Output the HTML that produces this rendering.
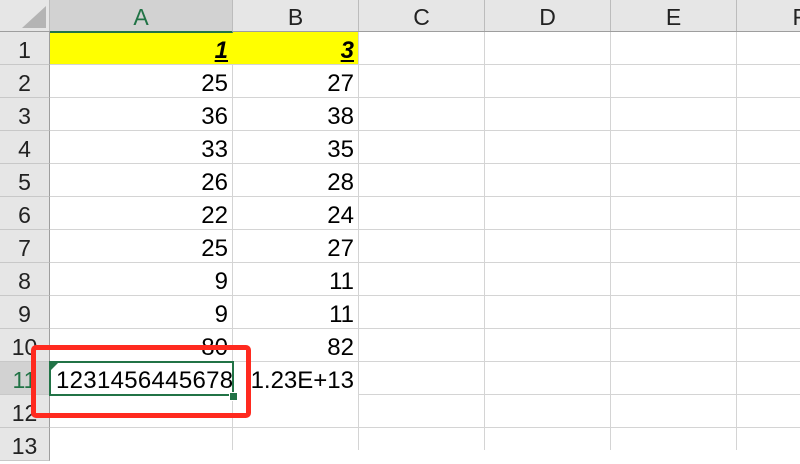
<!DOCTYPE html>
<html><head><style>
body{margin:0;width:800px;height:450px;overflow:hidden;background:#fff;font-family:"Liberation Sans",sans-serif;position:relative}
.grid{position:absolute;left:50px;top:32px;width:750px;height:418px;
background-image:repeating-linear-gradient(to bottom,transparent 0,transparent 32px,#d4d4d4 32px,#d4d4d4 33px);}
.v{position:absolute;top:32px;width:1px;height:418px;background:#d4d4d4}
.hdr{position:absolute;left:0;top:0;width:800px;height:31px;background:#e6e6e6;border-bottom:1px solid #9e9e9e}
.ch{position:absolute;top:0;height:31px;line-height:35px;text-align:center;font-size:23px;color:#222;border-right:1px solid #bcbcbc;box-sizing:border-box}
.rh{position:absolute;left:0;width:50px;height:33px;background:#e6e6e6;border-right:1px solid #9e9e9e;border-bottom:1px solid #c8c8c8;box-sizing:border-box;text-align:center;font-size:23px;line-height:36px;color:#222}
.c{position:absolute;height:33px;line-height:37px;font-size:24px;text-align:right;color:#000;box-sizing:border-box;padding-right:4px;white-space:nowrap}
</style></head><body>
<div class="grid"></div>
<div class="v" style="left:232px"></div><div class="v" style="left:358px"></div><div class="v" style="left:484px"></div><div class="v" style="left:610px"></div><div class="v" style="left:736px"></div>
<div style="position:absolute;left:50px;top:32px;width:308px;height:32px;background:#ffff00"></div>
<div class="hdr"></div>
<div style="position:absolute;left:0;top:0;width:50px;height:31px;border-right:1px solid #bcbcbc;box-sizing:border-box"></div>
<svg style="position:absolute;left:20px;top:4px" width="28" height="26"><polygon points="26,2 26,24 2,24" fill="#b4b4b4"/></svg>
<div class="ch" style="left:50px;width:183px;background:#d2d2d2;color:#217346;border-bottom:2px solid #217346;height:33px">A</div>
<div class="ch" style="left:233px;width:126px">B</div>
<div class="ch" style="left:359px;width:126px">C</div>
<div class="ch" style="left:485px;width:126px">D</div>
<div class="ch" style="left:611px;width:126px">E</div>
<div class="ch" style="left:737px;width:126px">F</div>
<div class="rh" style="top:32px">1</div><div class="rh" style="top:65px">2</div><div class="rh" style="top:98px">3</div><div class="rh" style="top:131px">4</div><div class="rh" style="top:164px">5</div><div class="rh" style="top:197px">6</div><div class="rh" style="top:230px">7</div><div class="rh" style="top:263px">8</div><div class="rh" style="top:296px">9</div><div class="rh" style="top:329px">10</div><div class="rh" style="top:362px;background:#d2d2d2;color:#217346">11</div><div class="rh" style="top:395px">12</div><div class="rh" style="top:428px">13</div>
<div class="c" style="left:50px;width:182px;top:32px;font-weight:bold;font-style:italic;text-decoration:underline">1</div>
<div class="c" style="left:232px;width:126px;top:32px;font-weight:bold;font-style:italic;text-decoration:underline">3</div>
<div class="c" style="left:50px;width:182px;top:65px">25</div><div class="c" style="left:232px;width:126px;top:65px">27</div>
<div class="c" style="left:50px;width:182px;top:98px">36</div><div class="c" style="left:232px;width:126px;top:98px">38</div>
<div class="c" style="left:50px;width:182px;top:131px">33</div><div class="c" style="left:232px;width:126px;top:131px">35</div>
<div class="c" style="left:50px;width:182px;top:164px">26</div><div class="c" style="left:232px;width:126px;top:164px">28</div>
<div class="c" style="left:50px;width:182px;top:197px">22</div><div class="c" style="left:232px;width:126px;top:197px">24</div>
<div class="c" style="left:50px;width:182px;top:230px">25</div><div class="c" style="left:232px;width:126px;top:230px">27</div>
<div class="c" style="left:50px;width:182px;top:263px">9</div><div class="c" style="left:232px;width:126px;top:263px">11</div>
<div class="c" style="left:50px;width:182px;top:296px">9</div><div class="c" style="left:232px;width:126px;top:296px">11</div>
<div class="c" style="left:50px;width:182px;top:329px">80</div><div class="c" style="left:232px;width:126px;top:329px">82</div>
<div class="c" style="left:234px;width:124px;top:362px;background:#fff">1.23E+13</div>
<div style="position:absolute;left:49px;top:361px;width:185px;height:35px;border:2px solid #217346;box-sizing:border-box;background:#fff;overflow:hidden">
<div style="position:absolute;left:5px;top:0;line-height:36px;font-size:24px;white-space:nowrap;letter-spacing:0.3px">1231456445678</div>
<svg style="position:absolute;left:0;top:0" width="8" height="8"><polygon points="0,0 7,0 0,7" fill="#217346"/></svg>
</div>
<div style="position:absolute;left:229px;top:392px;width:7px;height:7px;background:#217346;border:1px solid #fff"></div>
<div style="position:absolute;left:31px;top:345px;width:220px;height:73px;border:5px solid #ff2a1f;border-radius:5px;box-sizing:border-box"></div>
</body></html>
